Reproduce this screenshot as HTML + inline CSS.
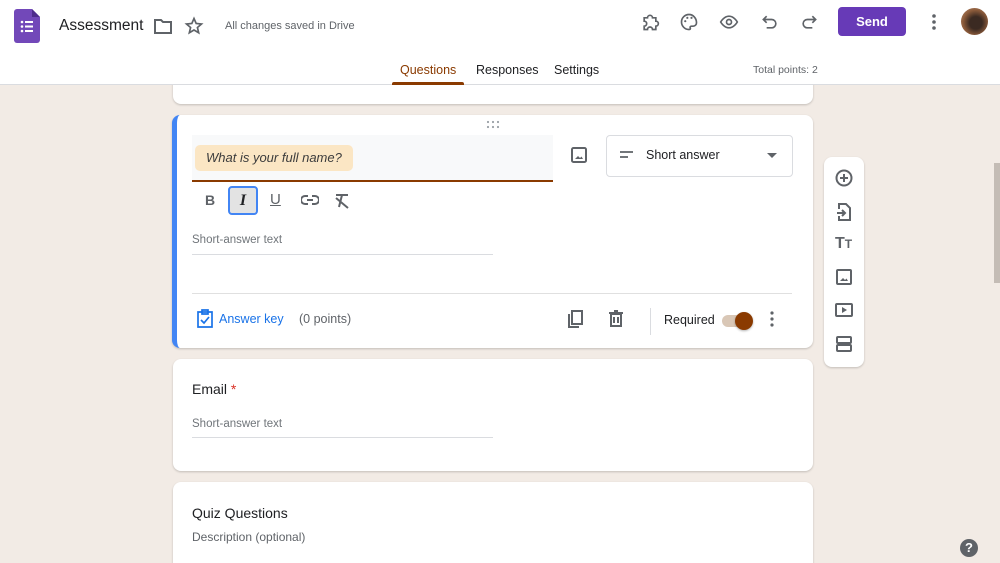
<!DOCTYPE html>
<html><head><style>
*{box-sizing:border-box;margin:0;padding:0}
html,body{width:1000px;height:563px;overflow:hidden}
body{background:#f2ebe5;font-family:"Liberation Sans",Arial,sans-serif;position:relative;color:#202124}
.abs{position:absolute}
.hdr{position:absolute;left:0;top:0;width:1000px;height:85px;background:#fff;border-bottom:1px solid #dadce0;z-index:2}
.card{position:absolute;background:#fff;border-radius:8px;box-shadow:0 1px 2px rgba(0,0,0,.2)}
svg{position:absolute}
.ic{stroke:#5f6368;fill:none;stroke-width:2}
</style></head><body>
<div class="hdr">
 <svg style="left:14px;top:9px" width="26" height="34" viewBox="0 0 26 34"><path d="M3 0h15l8 8v23a3 3 0 0 1-3 3H3a3 3 0 0 1-3-3V3a3 3 0 0 1 3-3z" fill="#7248b9"/><path d="M18 0v8h8z" fill="#4e2d8c"/><g fill="#fff"><circle cx="8" cy="13" r="1.3"/><circle cx="8" cy="17.5" r="1.3"/><circle cx="8" cy="22" r="1.3"/><rect x="11" y="12" width="8" height="2"/><rect x="11" y="16.5" width="8" height="2"/><rect x="11" y="21" width="8" height="2"/></g></svg>
 <div class="abs" style="left:59px;top:17px;font-size:15.5px">Assessment</div>
 <svg style="left:154px;top:18px" width="18" height="16"><path d="M1 2h6l2 2h8v11H1z" class="ic" stroke-width="1.6"/></svg>
 <svg style="left:184px;top:16px" width="20" height="20" viewBox="0 0 24 24"><path d="M12 3l2.6 6 6.4.6-4.9 4.2 1.5 6.3L12 16.8 6.4 20.1l1.5-6.3L3 9.6l6.4-.6z" class="ic" stroke-width="1.8"/></svg>
 <div class="abs" style="left:225px;top:20px;font-size:11px;color:#5f6368">All changes saved in Drive</div>
 <svg style="left:640px;top:12px" width="20" height="20" viewBox="0 0 24 24"><path d="M5 7h4a3 3 0 0 1 6 0h4v4a3 3 0 0 1 0 6v4h-4a3 3 0 0 0-6 0H5v-4a3 3 0 0 0 0-6z" class="ic"/></svg>
 <svg style="left:679px;top:12px" width="20" height="20" viewBox="0 0 24 24"><path d="M12 3a9 9 0 0 0 0 18c1.5 0 2-1 1.5-2s0-2 1.5-2h2a4 4 0 0 0 4-4c0-5.5-4-10-9-10z" class="ic"/><circle cx="7.5" cy="11" r="1.3" fill="#5f6368"/><circle cx="10" cy="7" r="1.3" fill="#5f6368"/><circle cx="15" cy="7" r="1.3" fill="#5f6368"/></svg>
 <svg style="left:718px;top:12px" width="22" height="20" viewBox="0 0 24 24"><path d="M2 12s4-7 10-7 10 7 10 7-4 7-10 7S2 12 2 12z" class="ic"/><circle cx="12" cy="12" r="3" class="ic"/></svg>
 <svg style="left:760px;top:12px" width="20" height="20" viewBox="0 0 24 24"><path d="M8 5L4 9l4 4M4 9h10a5 5 0 0 1 0 10h-6" class="ic"/></svg>
 <svg style="left:799px;top:12px" width="20" height="20" viewBox="0 0 24 24"><path d="M16 5l4 4-4 4M20 9H10a5 5 0 0 0 0 10h6" class="ic"/></svg>
 <div class="abs" style="left:838px;top:7px;width:68px;height:29px;background:#673ab7;border-radius:4px;color:#fff;font-size:13px;font-weight:bold;text-align:center;line-height:29px">Send</div>
 <svg style="left:930px;top:13px" width="8" height="18"><circle cx="4" cy="3" r="1.8" fill="#5f6368"/><circle cx="4" cy="9" r="1.8" fill="#5f6368"/><circle cx="4" cy="15" r="1.8" fill="#5f6368"/></svg>
 <div class="abs" style="left:961px;top:8px;width:27px;height:27px;border-radius:50%;background:radial-gradient(circle at 55% 55%,#3b2a22 30%,#8a5a3a 60%,#c09070)"></div>
 <div class="abs" style="left:400px;top:63px;font-size:12.5px;color:#8a3a00">Questions</div>
 <div class="abs" style="left:392px;top:82px;width:72px;height:3px;background:#8a3a00;border-radius:2px 2px 0 0"></div>
 <div class="abs" style="left:476px;top:63px;font-size:12.5px;color:#202124">Responses</div>
 <div class="abs" style="left:554px;top:63px;font-size:12.5px;color:#202124">Settings</div>
 <div class="abs" style="left:753px;top:64px;font-size:10.5px;color:#5f6368">Total points: 2</div>
</div>
<div class="card" style="left:173px;top:80px;width:640px;height:24px;border-radius:0 0 8px 8px"></div>
<div class="card" style="left:172px;top:115px;width:641px;height:233px;border-left:5px solid #4285f4">
 <svg style="left:309px;top:5px" width="16" height="10"><g fill="#9aa0a6"><circle cx="2" cy="2" r="1.1"/><circle cx="7" cy="2" r="1.1"/><circle cx="12" cy="2" r="1.1"/><circle cx="2" cy="7" r="1.1"/><circle cx="7" cy="7" r="1.1"/><circle cx="12" cy="7" r="1.1"/></g></svg>
 <div class="abs" style="left:15px;top:20px;width:361px;height:47px;background:#f8f9fa;border-bottom:2px solid #8a3a00"></div>
 <div class="abs" style="left:18px;top:30px;width:158px;height:26px;background:#fbe6c4;border-radius:5px;font-style:italic;font-size:13px;line-height:26px;padding-left:11px;color:#3c3c3c">What is your full name?</div>
 <svg style="left:394px;top:32px" width="16" height="16"><rect x="1" y="1" width="14" height="14" rx="1.5" class="ic" stroke-width="1.6"/><path d="M4 12l3-3 2 2 1.5-1.5L12 12z" fill="#5f6368"/></svg>
 <div class="abs" style="left:429px;top:20px;width:187px;height:42px;border:1px solid #dadce0;border-radius:4px"></div>
 <svg style="left:443px;top:36px" width="14" height="8"><path d="M0 1h13M0 6h8" stroke="#5f6368" stroke-width="1.8"/></svg>
 <div class="abs" style="left:469px;top:33px;font-size:12.5px">Short answer</div>
 <svg style="left:590px;top:38px" width="10" height="6"><path d="M0 0h10L5 5z" fill="#5f6368"/></svg>
 <div class="abs" style="left:28px;top:77px;font-size:14px;font-weight:bold;color:#5f6368">B</div>
 <div class="abs" style="left:51px;top:71px;width:30px;height:29px;border:2px solid #4285f4;border-radius:4px;background:#e3e3e3;text-align:center;font-style:italic;font-weight:bold;font-family:'Liberation Serif',serif;font-size:16px;line-height:25px">I</div>
 <div class="abs" style="left:93px;top:76px;font-size:15px;color:#5f6368;text-decoration:underline">U</div>
 <svg style="left:124px;top:79px" width="18" height="12"><path d="M7 2H4a4 4 0 0 0 0 8h3M11 2h3a4 4 0 0 1 0 8h-3M6 6h6" class="ic" stroke-width="1.6"/></svg>
 <svg style="left:157px;top:78px" width="16" height="16"><path d="M2 2h12M8 2l-3 12M2 5l12 10" class="ic" stroke-width="1.6"/></svg>
 <div class="abs" style="left:15px;top:119px;font-size:11.5px;color:#70757a">Short-answer text</div>
 <div class="abs" style="left:15px;top:139px;width:301px;height:1px;background:#dadce0"></div>
 <div class="abs" style="left:15px;top:178px;width:600px;height:1px;background:#e0e0e0"></div>
 <svg style="left:19px;top:194px" width="18" height="20"><path d="M2 3h14v15H2zM6 1h6v4H6zM5 11l3 3 5-6" fill="none" stroke="#1a73e8" stroke-width="1.7"/></svg>
 <div class="abs" style="left:42px;top:197px;font-size:12.5px;color:#1a73e8">Answer key</div>
 <div class="abs" style="left:122px;top:197px;font-size:12.5px;color:#5f6368">(0 points)</div>
 <svg style="left:391px;top:195px" width="16" height="18"><path d="M4 1h10v13H4zM1 4v13h10" class="ic" stroke-width="1.6"/></svg>
 <svg style="left:432px;top:195px" width="14" height="17"><path d="M2 4h10v12H2zM0 3h14M5 1h4M5 7v6M9 7v6" class="ic" stroke-width="1.6"/></svg>
 <div class="abs" style="left:473px;top:193px;width:1px;height:27px;background:#dadce0"></div>
 <div class="abs" style="left:487px;top:198px;font-size:12.5px">Required</div>
 <div class="abs" style="left:545px;top:200px;width:30px;height:12px;border-radius:6px;background:#d9c7b6"></div>
 <div class="abs" style="left:558px;top:197px;width:18px;height:18px;border-radius:50%;background:#8a3a00;box-shadow:0 1px 2px rgba(0,0,0,.3)"></div>
 <svg style="left:592px;top:196px" width="6" height="16"><circle cx="3" cy="2" r="1.6" fill="#5f6368"/><circle cx="3" cy="8" r="1.6" fill="#5f6368"/><circle cx="3" cy="14" r="1.6" fill="#5f6368"/></svg>
</div>
<div class="card" style="left:173px;top:359px;width:640px;height:112px">
 <div class="abs" style="left:19px;top:22px;font-size:14px">Email <span style="color:#d93025">*</span></div>
 <div class="abs" style="left:19px;top:59px;font-size:11.5px;color:#70757a">Short-answer text</div>
 <div class="abs" style="left:19px;top:78px;width:301px;height:1px;background:#dadce0"></div>
</div>
<div class="card" style="left:173px;top:482px;width:640px;height:90px">
 <div class="abs" style="left:19px;top:23px;font-size:14px">Quiz Questions</div>
 <div class="abs" style="left:19px;top:48px;font-size:12px;color:#5f6368">Description (optional)</div>
</div>
<div class="card" style="left:824px;top:157px;width:40px;height:210px">
 <svg style="left:11px;top:12px" width="18" height="18"><circle cx="9" cy="9" r="7.5" class="ic" stroke-width="1.6"/><path d="M9 5v8M5 9h8" class="ic" stroke-width="1.6"/></svg>
 <svg style="left:12px;top:46px" width="16" height="18"><path d="M3 6V1h7l4 4v12H3v-4M1 10h7M6 7l3 3-3 3" class="ic" stroke-width="1.6"/></svg>
 <div class="abs" style="left:11px;top:78px;font-size:16px;font-weight:bold;color:#5f6368">T<span style="font-size:12px">T</span></div>
 <svg style="left:12px;top:112px" width="16" height="16"><rect x="1" y="1" width="14" height="14" rx="1" class="ic" stroke-width="1.6"/><path d="M4 12l3-3 2 2 1.5-1.5L12 12z" fill="#5f6368"/></svg>
 <svg style="left:11px;top:146px" width="18" height="14"><rect x="1" y="1" width="16" height="12" rx="1" class="ic" stroke-width="1.6"/><path d="M7 4v6l5-3z" fill="#5f6368"/></svg>
 <svg style="left:12px;top:179px" width="16" height="16"><rect x="1" y="1" width="14" height="6" rx="1" class="ic" stroke-width="1.6"/><rect x="1" y="9" width="14" height="6" rx="1" class="ic" stroke-width="1.6"/></svg>
</div>
<div class="abs" style="left:994px;top:163px;width:6px;height:120px;background:#c4bcb5"></div>
<div class="abs" style="left:960px;top:539px;width:18px;height:18px;border-radius:50%;background:#5f6368;color:#fff;font-size:13px;font-weight:bold;text-align:center;line-height:18px">?</div>
</body></html>
